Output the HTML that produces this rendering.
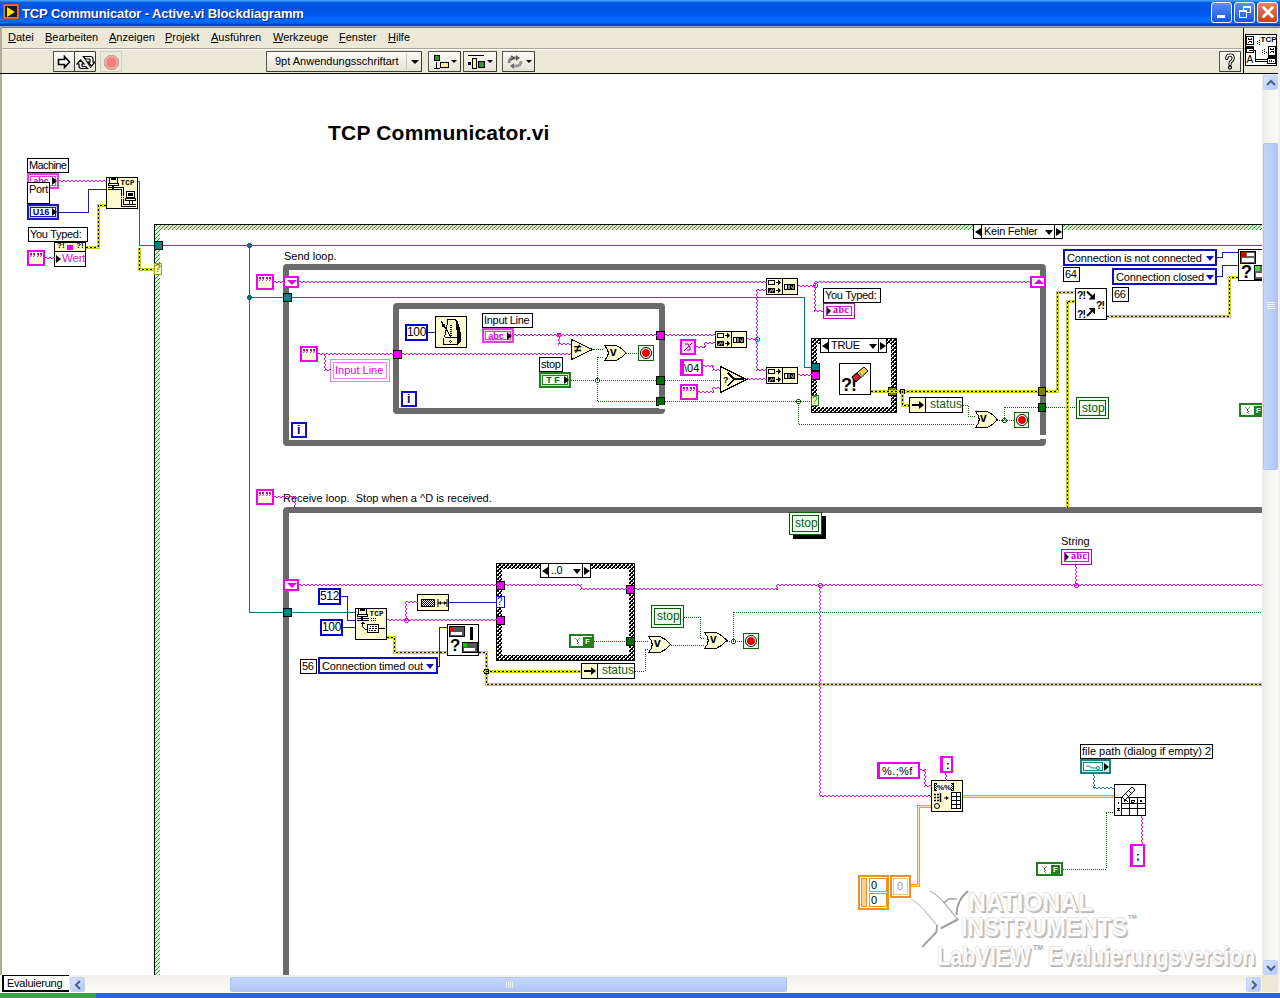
<!DOCTYPE html>
<html><head><meta charset="utf-8">
<style>
*{box-sizing:border-box}
html,body{margin:0;padding:0;width:1280px;height:998px;overflow:hidden;background:#fff;font-family:"Liberation Sans",sans-serif;font-size:11px;color:#000}
.a{position:absolute}
#title{left:0;top:0;width:1280px;height:28px;background:linear-gradient(#3d9bff 0,#3d9bff 1px,#2a80f0 1px,#2a80f0 2px,#0062e2 2px,#0058e4 4px,#0054e3 8px,#0056e8 13px,#005cf4 16px,#006cf8 19px,#0066f4 23px,#0048c8 24px,#0034ac 26px,#a8b0c8 26px,#a8b0c8 27px,#7c7464 27px,#7c7464 28px)}
#title .t{left:22px;top:6px;color:#fff;font-weight:bold;font-size:13px;letter-spacing:-0.12px;text-shadow:1px 1px 0 #0a1e7a}
#menu{left:0;top:28px;width:1280px;height:20px;background:#ece9d8}
#menu span{position:absolute;top:3px;font-size:11px}
#tool{left:0;top:48px;width:1280px;height:25px;background:#ece9d8;border-top:1px solid #aca899}
#canvas{left:0;top:73px;width:1262px;height:903px;background:#fff;border-top:2px solid #000;border-left:2px solid #a8a89c}
.btn{position:absolute;background:linear-gradient(#fbfbf7,#e6e3d3);border:1px solid #58574c;border-right-color:#3c3b32;border-bottom-color:#3c3b32;border-radius:1px}
.lbl{position:absolute;background:#fff;border:1px solid #000;font-size:11px;line-height:13px;padding:0 1px;white-space:nowrap}
.num{position:absolute;background:#fff;border:2px solid #1010c0;font-size:11px;line-height:12px;padding:0 1px;white-space:nowrap}
.ycell{position:absolute;background:#fcfccc;border:1px solid #000}
.pinkc{position:absolute;background:#fcfccc;border:3px solid #f000f0}
</style><style>.tx{font-size:11px;line-height:13px;white-space:nowrap}</style></head><body>
<div id="title" class="a">
  <div class="a" style="left:4px;top:5px;width:14px;height:13px;background:#1a1a1a;border:1px solid #c89010;box-shadow:0 0 0 1px #e05020"><div class="a" style="left:2px;top:1px;width:0;height:0;border-left:8px solid #f8e000;border-top:5px solid transparent;border-bottom:5px solid transparent"></div></div>
  <div class="a t">TCP Communicator - Active.vi Blockdiagramm</div>
  <div class="a" style="left:1211px;top:2px;width:21px;height:21px;border:1px solid #fff;border-radius:3px;background:linear-gradient(#5b8ef8,#1b52e0)"><div class="a" style="left:5px;top:12px;width:8px;height:3px;background:#fff"></div></div>
  <div class="a" style="left:1234px;top:2px;width:21px;height:21px;border:1px solid #fff;border-radius:3px;background:linear-gradient(#5b8ef8,#1b52e0)"><div class="a" style="left:8px;top:3px;width:8px;height:7px;border:1px solid #fff;border-top-width:2px"></div><div class="a" style="left:4px;top:7px;width:8px;height:8px;border:1px solid #fff;border-top-width:2px;background:#3a6ef0"></div></div>
  <div class="a" style="left:1257px;top:2px;width:21px;height:21px;border:1px solid #fff;border-radius:3px;background:linear-gradient(#e8845f,#c8401c)"><div class="a" style="left:1px;top:-1px;color:#fff;font-size:19px;font-weight:bold;line-height:21px;width:18px;text-align:center">✕</div></div>
</div>
<div id="menu" class="a">
  <span style="left:8px"><u>D</u>atei</span>
  <span style="left:45px"><u>B</u>earbeiten</span>
  <span style="left:109px"><u>A</u>nzeigen</span>
  <span style="left:165px"><u>P</u>rojekt</span>
  <span style="left:211px"><u>A</u>usführen</span>
  <span style="left:273px"><u>W</u>erkzeuge</span>
  <span style="left:339px"><u>F</u>enster</span>
  <span style="left:388px"><u>H</u>ilfe</span>
</div>
<div id="tool" class="a">
  <div class="btn" style="left:53px;top:2px;width:22px;height:21px"><svg class="a" style="left:3px;top:3px" width="15" height="14"><path d="M1.5 4.5h6v-3l5 5.5-5 5.5v-3h-6z" fill="#fff" stroke="#000" stroke-width="1.6"/></svg></div>
  <div class="btn" style="left:74px;top:2px;width:22px;height:21px;border-color:#3c3c30"><svg class="a" style="left:1px;top:1px" width="19" height="18"><path d="M7.5 3.5h7q2.5 0 2.5 2.5v3h2l-3.5 4-3.5-4h2v-2.5q0-.5-.5-.5h-4z" fill="#fff" stroke="#000" stroke-width="1.2"/><path d="M11.5 15.5h-6q-2.5 0-2.5-2.5v-2h-2l3.5-4 3.5 4h-2v2q0 .5.5.5h3z" fill="#fff" stroke="#000" stroke-width="1.2"/><path d="M7 3l8 12" stroke="#000" stroke-width="1"/></svg></div>
  <div class="a" style="left:100px;top:2px;width:22px;height:21px;border:1px solid #d4d0c0;background:#ebe9dc"><svg class="a" style="left:2px;top:2px" width="17" height="17"><path d="M5.5 1.5h6l4 4v6l-4 4h-6l-4-4v-6z" fill="#f49090" stroke="#b8a898" stroke-width="1"/><path d="M6 3h5l3 3v5l-3 3h-5l-3-3v-5z" fill="#f28080" stroke="#f8c8c0" stroke-width="0.8"/></svg></div>
  <div class="btn" style="left:266px;top:2px;width:156px;height:21px"><span class="a" style="left:8px;top:3px;font-size:11px">9pt Anwendungsschriftart</span><div class="a" style="left:139px;top:2px;width:1px;height:16px;background:#c8c5b5"></div><div class="a" style="left:144px;top:8px;border-left:4px solid transparent;border-right:4px solid transparent;border-top:4px solid #000"></div></div>
  <div class="btn" style="left:428px;top:2px;width:33px;height:21px"><div class="a" style="left:5px;top:3px;width:6px;height:6px;background:#2a9a2a;border:1px solid #000"></div><div class="a" style="left:7px;top:10px;width:1px;height:6px;background:#000"></div><div class="a" style="left:5px;top:16px;width:6px;height:1px;background:#000"></div><div class="a" style="left:11px;top:10px;width:9px;height:6px;background:#f8f098;border:1px solid #000"></div><div class="a" style="left:22px;top:8px;border-left:3px solid transparent;border-right:3px solid transparent;border-top:3px solid #000"></div></div>
  <div class="btn" style="left:463px;top:2px;width:34px;height:21px"><div class="a" style="left:4px;top:3px;width:16px;height:1px;background:#000"></div><div class="a" style="left:4px;top:10px;width:3px;height:3px;background:#000"></div><div class="a" style="left:8px;top:6px;width:5px;height:11px;background:#f8f098;border:1px solid #000"></div><div class="a" style="left:14px;top:9px;width:7px;height:7px;background:#2a9a2a;border:1px solid #000"></div><div class="a" style="left:23px;top:8px;border-left:3px solid transparent;border-right:3px solid transparent;border-top:3px solid #000"></div></div>
  <div class="btn" style="left:502px;top:2px;width:33px;height:21px"><svg class="a" style="left:2px;top:2px" width="20" height="16"><path d="M4 9Q4 4 9 4H12" fill="none" stroke="#8a8a8a" stroke-width="3"/><path d="M11 1l4 3-4 3z" fill="#5a5a5a"/><path d="M16 7Q16 12 11 12H8" fill="none" stroke="#9a9a9a" stroke-width="3"/><path d="M9 9l-4 3 4 3z" fill="#6a6a6a"/><path d="M6 2l3 2-3 2" fill="none" stroke="#444" stroke-width="1.2"/></svg><div class="a" style="left:23px;top:8px;border-left:3px solid transparent;border-right:3px solid transparent;border-top:3px solid #000"></div></div>
  <div class="btn" style="left:1219px;top:2px;width:22px;height:21px"><svg class="a" style="left:0;top:0" width="20" height="19"><path d="M6.8 6.5Q6.8 3 10 3Q13.2 3 13.2 6.2Q13.2 8.2 11 9.6Q10 10.4 10 12V12.6" fill="none" stroke="#000" stroke-width="3.2" stroke-linecap="round"/><path d="M6.8 6.5Q6.8 3 10 3Q13.2 3 13.2 6.2Q13.2 8.2 11 9.6Q10 10.4 10 12V12.6" fill="none" stroke="#ffffe8" stroke-width="1.3" stroke-linecap="round"/><circle cx="10" cy="15.6" r="2.1" fill="#000"/><circle cx="10" cy="15.6" r="0.9" fill="#fff"/></svg></div>
  <div class="a" style="left:1243px;top:-21px;width:1px;height:45px;background:#000"></div>
  <div class="a" style="left:1245px;top:-15px;width:32px;height:32px;background:#fff;border:1px solid #000"><svg class="a" style="left:-1px;top:-1px" width="32" height="32" shape-rendering="crispEdges"><rect x="1.5" y="2.5" width="7" height="8" fill="#fff" stroke="#000"/><path d="M3 4h1M6 4h1M3 5h4M4 7h3M3 8h1M6 8h1" stroke="#000"/><path d="M1 12h8v2h-8z" fill="#000"/><rect x="1.5" y="14.5" width="7" height="4" fill="#fff" stroke="#000"/><path d="M1 16h1M4 16h4" stroke="#000"/><path d="M9 16.5h1.5v9h12" stroke="#000" fill="none"/><path d="M9 18.5h-0.5M10.5 18.5v9h12" stroke="#000" fill="none"/><path d="M12 7h1M14 6h1M12 9h1M14 8h1M14 10h1" stroke="#000"/><text x="15.5" y="8" font-size="8" font-weight="bold" font-family="Liberation Sans,sans-serif">TCP</text><rect x="23.5" y="12.5" width="7" height="9" fill="#fff" stroke="#000"/><path d="M25 14h1M28 14h1M25 15h4M26 17h3M25 18h1M28 18h1" stroke="#000"/><path d="M23 22h8v2h-8z" fill="#000"/><path d="M17 16h1M19 15h1M17 18h1M19 17h1M21 18h1M19 19h1" stroke="#000"/><rect x="22.5" y="24.5" width="8" height="5" fill="#fff" stroke="#000"/><path d="M24 26h1v2h-1zM26 26h1v2h-1zM28 27h1v1h-1z" fill="#000"/><text x="1.5" y="29" font-size="10" font-family="Liberation Sans,sans-serif">A</text></svg></div>
</div>
<div class="a" style="left:0;top:74px;width:1262px;height:901px;overflow:hidden;background:#fff"><div class="a" style="left:0;top:-74px;width:1280px;height:998px"><svg class="a" style="left:154px;top:224px" width="1146" height="876" shape-rendering="crispEdges"><defs><pattern id="hp" width="4" height="4" patternUnits="userSpaceOnUse"><rect width="4" height="4" fill="#d0f8d0"/><rect x="3" y="0" width="1" height="1" fill="#3c903c"/><rect x="2" y="1" width="1" height="1" fill="#3c903c"/><rect x="1" y="2" width="1" height="1" fill="#3c903c"/><rect x="0" y="3" width="1" height="1" fill="#3c903c"/></pattern></defs><rect x="0" y="0" width="1146" height="876" fill="url(#hp)"/><rect x="0.5" y="0.5" width="1145" height="875" fill="none" stroke="#000"/><rect x="6" y="6" width="1146" height="876" fill="#fff"/></svg>
<div class="a" style="left:973px;top:224px;width:90px;height:15px;background:#fff;border:1px solid #000"><div class="a" style="left:1px;top:3px;border-right:6px solid #000;border-top:4px solid transparent;border-bottom:4px solid transparent"></div><div class="a" style="left:7px;top:0;width:1px;height:13px;background:#000"></div><span class="a tx" style="left:10px;top:0;letter-spacing:-0.25px">Kein Fehler</span><div class="a" style="left:71px;top:5px;border-left:4px solid transparent;border-right:4px solid transparent;border-top:5px solid #000"></div><div class="a" style="left:80px;top:0;width:1px;height:13px;background:#000"></div><div class="a" style="left:82px;top:3px;border-left:6px solid #000;border-top:4px solid transparent;border-bottom:4px solid transparent"></div></div>
<div class="a tx" style="left:328px;top:125px;font-size:21px;font-weight:bold;letter-spacing:0.2px;line-height:16px">TCP Communicator.vi</div>
<div class="a" style="left:283px;top:264px;width:763px;height:182px;border:6px solid #6a6a6a;border-radius:4px"></div>
<div class="a" style="left:393px;top:303px;width:272px;height:111px;border:6px solid #6a6a6a;border-radius:4px"></div>
<div class="a" style="left:283px;top:507px;width:1117px;height:593px;border:6px solid #6a6a6a;border-radius:4px"></div>
<div class="a" style="left:27px;top:158px;width:42px;height:15px;background:#fff;border:1px solid #000;"><span class="a tx" style="left:1px;top:0px;letter-spacing:-0.6px">Machine</span></div>
<div class="a" style="left:27px;top:173px;width:32px;height:16px;background:#f8d0f8;border:2px solid #e040e0"><div class="a" style="left:1px;top:1px;right:1px;bottom:1px;background:#fff;border:1px solid #e040e0"></div><span class="a" style="left:2px;width:20px;text-align:center;top:0px;font-size:9px;line-height:12px;font-weight:bold;color:#d000d0">abc</span><div class="a" style="right:0px;top:2px;border-left:5px solid #000;border-top:4px solid transparent;border-bottom:4px solid transparent"></div></div>
<div class="a" style="left:27px;top:182px;width:23px;height:22px;background:#fff;border:1px solid #000;"><span class="a tx" style="left:1px;top:0px;letter-spacing:-0.3px">Port</span></div>
<div class="a" style="left:27px;top:204px;width:32px;height:16px;background:#c8c8f0;border:2px solid #1818c0"><div class="a" style="left:1px;top:1px;right:1px;bottom:1px;background:#fff;border:1px solid #1818c0"></div><span class="a" style="left:2px;width:20px;text-align:center;top:0px;font-size:9px;line-height:12px;font-weight:bold;color:#0000a0">U16</span><div class="a" style="right:0px;top:2px;border-left:5px solid #000;border-top:4px solid transparent;border-bottom:4px solid transparent"></div></div>
<div class="a" style="left:28px;top:227px;width:60px;height:15px;background:#fff;border:1px solid #000;"><span class="a tx" style="left:1px;top:0px;letter-spacing:-0.3px">You Typed:</span></div>
<div class="a" style="left:54px;top:242px;width:32px;height:25px;background:#fff;border:1px solid #000"><div class="a" style="left:0;top:0;width:30px;height:9px;background:#fcfcd0;border-bottom:1px solid #000"></div><span class="a" style="left:2px;top:-2px;font-size:8px;font-weight:bold">?!</span><div class="a" style="left:12px;top:2px;width:6px;height:5px;background:#f000f0"></div><span class="a" style="left:21px;top:-2px;font-size:8px;font-weight:bold">?!</span><div class="a" style="left:1px;top:12px;border-left:5px solid #000;border-top:4px solid transparent;border-bottom:4px solid transparent"></div><span class="a" style="left:7px;top:9px;font-size:11.5px;line-height:13px;color:#d020d0;letter-spacing:-0.2px">Wert</span></div>
<div class="a" style="left:27px;top:250px;width:18px;height:16px;background:linear-gradient(#fff 0,#fff 40%,#fcfcd0 60%);border:2px solid #f000f0;"><svg class="a" style="left:0;top:0" width="14" height="8"><path d="M1 1h2v2l-1 2h-1l1-2h-1z" fill="#a01ca0"/><path d="M4 1h2v2l-1 2h-1l1-2h-1z" fill="#a01ca0"/><path d="M8 1h2v2l-1 2h-1l1-2h-1z" fill="#a01ca0"/><path d="M11 1h2v2l-1 2h-1l1-2h-1z" fill="#a01ca0"/></svg></div>
<div class="a" style="left:106px;top:177px;width:32px;height:32px;background:#fcfcd0;border:1px solid #000;"><svg class="a" style="left:0;top:0" width="30" height="30" shape-rendering="crispEdges"><path d="M2.5 0v5.5h8v-5.5" stroke="#000" fill="none"/><rect x="4" y="0" width="5" height="2" fill="#000"/><rect x="1.5" y="5.5" width="10" height="2" fill="#fff" stroke="#000"/><path d="M1 9.5H5M7 9.5H16.5V26.5H29M1 11.5H5M7 11.5H14.5V28.5H29" stroke="#000" fill="none"/><path d="M5 9.5l1-1 1 1M5 11.5l1-1 1 1" stroke="#000" fill="none"/><rect x="14" y="18" width="3" height="1" fill="#fcfcd0"/><rect x="14" y="20" width="3" height="1" fill="#fcfcd0"/><path d="M19.5 13.5v6h8v-6z" stroke="#000" fill="#fff"/><rect x="21" y="15" width="5" height="3" fill="#000"/><rect x="18.5" y="20.5" width="10" height="2" fill="#fff" stroke="#000"/><path d="M22 23v3M25 23v3" stroke="#000"/><text x="13.5" y="7" font-size="7.5" font-weight="bold" font-family="Liberation Mono,monospace" letter-spacing="0.3">TCP</text></svg></div>
<div class="a" style="left:154px;top:241px;width:9px;height:9px;background:#008080;border:1px solid #000"></div>
<div class="a" style="left:154px;top:263px;width:8px;height:12px;background:#fcfcb0;border:1px solid #a0a000"><span class="a" style="left:0;top:-1px;font-size:10px;color:#606000">?</span></div>
<div class="a" style="left:283px;top:293px;width:9px;height:9px;background:#008080;border:1px solid #000"></div>
<div class="a" style="left:283px;top:608px;width:9px;height:9px;background:#008080;border:1px solid #000"></div>
<div class="a tx" style="left:284px;top:250px;">Send loop.</div>
<div class="a" style="left:256px;top:274px;width:18px;height:16px;background:linear-gradient(#fff 0,#fff 40%,#fcfcd0 60%);border:2px solid #f000f0;"><svg class="a" style="left:0;top:0" width="14" height="8"><path d="M1 1h2v2l-1 2h-1l1-2h-1z" fill="#a01ca0"/><path d="M4 1h2v2l-1 2h-1l1-2h-1z" fill="#a01ca0"/><path d="M8 1h2v2l-1 2h-1l1-2h-1z" fill="#a01ca0"/><path d="M11 1h2v2l-1 2h-1l1-2h-1z" fill="#a01ca0"/></svg></div>
<div class="a" style="left:283px;top:276px;width:16px;height:12px;background:#fff;border:2px solid #f000f0"><div class="a" style="left:2px;top:2px;border-top:5px solid #e000e0;border-left:5px solid transparent;border-right:5px solid transparent"></div></div>
<div class="a" style="left:1030px;top:276px;width:16px;height:12px;background:#fff;border:2px solid #f000f0"><div class="a" style="left:2px;top:1px;border-bottom:5px solid #e000e0;border-left:5px solid transparent;border-right:5px solid transparent"></div></div>
<div class="a" style="left:291px;top:422px;width:16px;height:16px;background:#fff;border:2px solid #1010c0"><span class="a" style="left:4px;top:-1px;font-size:12px;font-weight:bold;color:#000090;font-family:Liberation Sans,sans-serif">i</span></div>
<div class="a" style="left:405px;top:324px;width:23px;height:17px;background:#fff;border:2px solid #0000d0;"><span class="a tx" style="left:0;width:19px;text-align:center;top:0px;letter-spacing:-0.3px;font-size:12px">100</span></div>
<div class="a" style="left:435px;top:316px;width:32px;height:32px;background:#fcfcd0;border:1px solid #000;"><svg class="a" style="left:0;top:0" width="30" height="30" shape-rendering="crispEdges"><path d="M11.5 2.5h8l3 6 2 10-3 8h-13l1-6h-2l3-16z" fill="#fcfcd0" stroke="none"/><path d="M11 2.5h9M11.5 3v3l-3 14M8.5 20.5h12M7.5 21v6.5h13.5V21" stroke="#000" fill="none"/><path d="M19 2l3 3 2 7 1.5 8-1 5-3.5 3v-8l-1-14z" fill="#000"/><path d="M14 8h2M14 10h2M14 12h2M14 14h2M14 16h2M14 18h2" stroke="#000"/><path d="M5 4l10 16" stroke="#000"/><rect x="6" y="7" width="3" height="3" fill="#000"/><path d="M14 23h1M13 24h1M15 24h1M14 25h1" stroke="#000"/></svg></div>
<div class="a" style="left:482px;top:313px;width:51px;height:15px;background:#fff;border:1px solid #000;"><span class="a tx" style="left:1px;top:0px;letter-spacing:-0.3px">Input Line</span></div>
<div class="a" style="left:482px;top:328px;width:32px;height:15px;background:#f8d0f8;border:2px solid #e040e0"><div class="a" style="left:1px;top:1px;right:1px;bottom:1px;background:#fff;border:1px solid #e040e0"></div><span class="a" style="left:2px;width:20px;text-align:center;top:0px;font-size:9px;line-height:12px;font-weight:bold;color:#d000d0">abc</span><div class="a" style="right:0px;top:2px;border-left:5px solid #000;border-top:4px solid transparent;border-bottom:4px solid transparent"></div></div>
<div class="a" style="left:300px;top:346px;width:18px;height:16px;background:linear-gradient(#fff 0,#fff 40%,#fcfcd0 60%);border:2px solid #f000f0;"><svg class="a" style="left:0;top:0" width="14" height="8"><path d="M1 1h2v2l-1 2h-1l1-2h-1z" fill="#a01ca0"/><path d="M4 1h2v2l-1 2h-1l1-2h-1z" fill="#a01ca0"/><path d="M8 1h2v2l-1 2h-1l1-2h-1z" fill="#a01ca0"/><path d="M11 1h2v2l-1 2h-1l1-2h-1z" fill="#a01ca0"/></svg></div>
<div class="a" style="left:330px;top:359px;width:60px;height:23px;background:#fff;border:1px solid #f080f0"><div class="a" style="left:2px;top:2px;right:2px;bottom:2px;border:1px solid #f080f0"></div><span class="a tx" style="left:4px;top:4px;color:#e000e0">Input Line</span></div>
<div class="a" style="left:393px;top:350px;width:9px;height:9px;background:#f000f0;border:1px solid #000"></div>
<div class="a" style="left:401px;top:391px;width:16px;height:16px;background:#fff;border:2px solid #1010c0"><span class="a" style="left:4px;top:-1px;font-size:12px;font-weight:bold;color:#000090;font-family:Liberation Sans,sans-serif">i</span></div>
<div class="a" style="left:638px;top:345px;width:16px;height:16px;background:#e8f8e8;border:1px solid #106010"><div class="a" style="left:1px;top:1px;width:12px;height:12px;border-radius:50%;background:#fff;border:1px solid #300000"></div><div class="a" style="left:3px;top:3px;width:8px;height:8px;border-radius:50%;background:#f00000;border:1px solid #c00000"></div></div>
<div class="a" style="left:539px;top:357px;width:24px;height:15px;background:#fff;border:1px solid #000;"><span class="a tx" style="left:1px;top:0px;letter-spacing:-0.3px">stop</span></div>
<div class="a" style="left:539px;top:372px;width:32px;height:16px;background:#c0e8c0;border:2px solid #208020"><div class="a" style="left:1px;top:1px;right:1px;bottom:1px;background:#f0fff0;border:1px solid #208020"></div><span class="a" style="left:2px;width:20px;text-align:center;top:0px;font-size:9px;line-height:12px;font-weight:bold;color:#106010">T F</span><div class="a" style="right:0px;top:2px;border-left:5px solid #000;border-top:4px solid transparent;border-bottom:4px solid transparent"></div></div>
<div class="a" style="left:656px;top:331px;width:9px;height:9px;background:#f000f0;border:1px solid #000"></div>
<div class="a" style="left:656px;top:376px;width:9px;height:9px;background:#007000;border:1px solid #000"></div>
<div class="a" style="left:656px;top:397px;width:9px;height:9px;background:#007000;border:1px solid #000"></div>
<div class="a" style="left:766px;top:278px;width:32px;height:17px;background:#fcfcd0;border:1px solid #000;"><div class="a" style="left:15px;top:0;width:1px;height:15px;background:#000"></div><svg class="a" style="left:0;top:0" width="30" height="15"><rect x="1" y="1" width="7" height="5" fill="#000"/><rect x="2" y="2" width="5" height="3" fill="#fcfcd0"/><rect x="1" y="9" width="7" height="5" fill="#000"/><path d="M2 13h1M3 12h1M4 11h1M5 12h1M6 11h1" stroke="#fff"/><path d="M9 3.5h3M9 11.5h3" stroke="#000" stroke-width="1.2"/><path d="M11 0.5L14 3.5L11 6.5zM11 8.5L14 11.5L11 14.5z" fill="#000"/><rect x="17" y="5" width="11" height="6" fill="#000"/><rect x="18" y="6" width="2" height="4" fill="#fff"/><path d="M21 7h2M22 9h1M21 9h1" stroke="#fff"/><path d="M25 9h2M24 8h1M26 7h1" stroke="#fff"/></svg></div>
<div class="a" style="left:715px;top:331px;width:32px;height:17px;background:#fcfcd0;border:1px solid #000;"><div class="a" style="left:15px;top:0;width:1px;height:15px;background:#000"></div><svg class="a" style="left:0;top:0" width="30" height="15"><rect x="1" y="1" width="7" height="5" fill="#000"/><rect x="2" y="2" width="5" height="3" fill="#fcfcd0"/><rect x="1" y="9" width="7" height="5" fill="#000"/><path d="M2 13h1M3 12h1M4 11h1M5 12h1M6 11h1" stroke="#fff"/><path d="M9 3.5h3M9 11.5h3" stroke="#000" stroke-width="1.2"/><path d="M11 0.5L14 3.5L11 6.5zM11 8.5L14 11.5L11 14.5z" fill="#000"/><rect x="17" y="5" width="11" height="6" fill="#000"/><rect x="18" y="6" width="2" height="4" fill="#fff"/><path d="M21 7h2M22 9h1M21 9h1" stroke="#fff"/><path d="M25 9h2M24 8h1M26 7h1" stroke="#fff"/></svg></div>
<div class="a" style="left:766px;top:367px;width:32px;height:17px;background:#fcfcd0;border:1px solid #000;"><div class="a" style="left:15px;top:0;width:1px;height:15px;background:#000"></div><svg class="a" style="left:0;top:0" width="30" height="15"><rect x="1" y="1" width="7" height="5" fill="#000"/><rect x="2" y="2" width="5" height="3" fill="#fcfcd0"/><rect x="1" y="9" width="7" height="5" fill="#000"/><path d="M2 13h1M3 12h1M4 11h1M5 12h1M6 11h1" stroke="#fff"/><path d="M9 3.5h3M9 11.5h3" stroke="#000" stroke-width="1.2"/><path d="M11 0.5L14 3.5L11 6.5zM11 8.5L14 11.5L11 14.5z" fill="#000"/><rect x="17" y="5" width="11" height="6" fill="#000"/><rect x="18" y="6" width="2" height="4" fill="#fff"/><path d="M21 7h2M22 9h1M21 9h1" stroke="#fff"/><path d="M25 9h2M24 8h1M26 7h1" stroke="#fff"/></svg></div>
<div class="a" style="left:680px;top:339px;width:16px;height:16px;background:#f8d8f8;border:2px solid #f000f0"><svg class="a" style="left:0;top:0" width="12" height="12"><path d="M2 10L10 2" stroke="#a000a0"/><path d="M3 3h3l2 3v3h-3" stroke="#a000a0" fill="none"/></svg></div>
<div class="a" style="left:680px;top:359px;width:23px;height:17px;background:#fff;border:2px solid #f000f0;border-left-width:4px"><span class="a tx" style="left:0;top:1px">\04</span></div>
<div class="a" style="left:680px;top:384px;width:18px;height:16px;background:linear-gradient(#fff 0,#fff 40%,#fcfcd0 60%);border:2px solid #f000f0;"><svg class="a" style="left:0;top:0" width="14" height="8"><path d="M1 1h2v2l-1 2h-1l1-2h-1z" fill="#a01ca0"/><path d="M4 1h2v2l-1 2h-1l1-2h-1z" fill="#a01ca0"/><path d="M8 1h2v2l-1 2h-1l1-2h-1z" fill="#a01ca0"/><path d="M11 1h2v2l-1 2h-1l1-2h-1z" fill="#a01ca0"/></svg></div>
<div class="a" style="left:823px;top:288px;width:58px;height:15px;background:#fff;border:1px solid #000;"><span class="a tx" style="left:1px;top:0px;letter-spacing:-0.3px">You Typed:</span></div>
<div class="a" style="left:823px;top:303px;width:32px;height:16px;background:#fdf0fd;border:1px solid #a010a0"><div class="a" style="left:2px;top:2px;right:2px;bottom:2px;border:1px solid #c020c0"></div><div class="a" style="left:3px;top:3px;border-left:4px solid #200020;border-top:4px solid transparent;border-bottom:4px solid transparent"></div><span class="a" style="left:9px;top:0;font-size:10px;font-weight:bold;color:#c000c0;font-family:Liberation Serif,serif;letter-spacing:0.5px">abc</span></div>
<svg class="a" style="left:811px;top:338px" width="86" height="75" shape-rendering="crispEdges"><defs><pattern id="ck811" x="1" y="1" width="4" height="4" patternUnits="userSpaceOnUse"><rect width="4" height="4" fill="#000"/><rect x="0" y="0" width="2" height="1" fill="#fff"/><rect x="0" y="1" width="1" height="1" fill="#fff"/><rect x="2" y="2" width="2" height="1" fill="#fff"/><rect x="2" y="3" width="1" height="1" fill="#fff"/></pattern></defs><rect width="86" height="75" fill="url(#ck811)"/><rect x="0.5" y="0.5" width="85" height="74" fill="none" stroke="#000"/><rect x="6" y="6" width="74" height="63" fill="#fff"/></svg>
<div class="a" style="left:820px;top:338px;width:67px;height:15px;background:#fff;border:1px solid #000"><div class="a" style="left:1px;top:3px;border-right:6px solid #000;border-top:4px solid transparent;border-bottom:4px solid transparent"></div><div class="a" style="left:7px;top:0;width:1px;height:13px;background:#000"></div><span class="a tx" style="left:10px;top:0;letter-spacing:-0.3px">TRUE</span><div class="a" style="left:48px;top:5px;border-left:4px solid transparent;border-right:4px solid transparent;border-top:5px solid #000"></div><div class="a" style="left:57px;top:0;width:1px;height:13px;background:#000"></div><div class="a" style="left:59px;top:3px;border-left:6px solid #000;border-top:4px solid transparent;border-bottom:4px solid transparent"></div></div>
<div class="a" style="left:839px;top:363px;width:32px;height:32px;background:#fcfcd0;border:1px solid #000;background:#fff"><span class="a" style="left:1px;top:12px;font-size:18px;font-weight:bold;line-height:19px;letter-spacing:-1px">?!</span><svg class="a" style="left:0;top:0" width="30" height="30"><path d="M12 13l12-10 4 4-12 11z" fill="#f0d040" stroke="#000"/><path d="M12 13l5-4 3.5 4-4.5 5z" fill="#d02040" stroke="#000"/><path d="M19.5 9l4 4" stroke="#a0a0a0" stroke-width="1.5"/></svg></div>
<div class="a" style="left:811px;top:363px;width:9px;height:8px;background:#008080;border:1px solid #000"></div>
<div class="a" style="left:811px;top:371px;width:9px;height:9px;background:#f000f0;border:1px solid #000"></div>
<div class="a" style="left:811px;top:395px;width:8px;height:11px;background:#f0fcc0;border:1px solid #208020"><span class="a" style="left:0;top:-1px;font-size:10px;color:#208020">?</span></div>
<div class="a" style="left:888px;top:387px;width:9px;height:9px;background:#808000;border:1px solid #000"></div>
<div class="a" style="left:909px;top:397px;width:54px;height:16px;background:#fff;border:1px solid #000"><div class="a" style="left:0;top:0;width:16px;height:14px;background:#fcfcd0;border-right:1px solid #000"></div><svg class="a" style="left:1px;top:2px" width="14" height="10"><path d="M1 5h8" stroke="#000" stroke-width="2"/><path d="M8 1l5 4-5 4z" fill="#000"/></svg><span class="a tx" style="left:20px;top:0;color:#106010;font-size:12px">status</span></div>
<div class="a" style="left:1014px;top:412px;width:15px;height:16px;background:#e8f8e8;border:1px solid #106010"><div class="a" style="left:1px;top:1px;width:12px;height:12px;border-radius:50%;background:#fff;border:1px solid #300000"></div><div class="a" style="left:3px;top:3px;width:8px;height:8px;border-radius:50%;background:#f00000;border:1px solid #c00000"></div></div>
<div class="a" style="left:1038px;top:387px;width:8px;height:9px;background:#808000;border:1px solid #000"></div>
<div class="a" style="left:1038px;top:403px;width:8px;height:9px;background:#007000;border:1px solid #000"></div>
<div class="a" style="left:1076px;top:397px;width:33px;height:22px;background:#f0fcf0;border:1px solid #105a10"><div class="a" style="left:2px;top:2px;right:2px;bottom:2px;border:1px solid #105a10"></div><span class="a tx" style="left:5px;top:4px;color:#105a10;font-size:12px">stop</span></div>
<div class="a" style="left:1075px;top:288px;width:32px;height:32px;background:#fcfcd0;border:1px solid #000;background:#fff"><svg class="a" style="left:0;top:0" width="30" height="30"><g font-family="Liberation Sans,sans-serif" font-weight="bold" font-size="10.5" letter-spacing="-0.8"><text x="1" y="10">?!</text><text x="20" y="20">?!</text><text x="1" y="29">?!</text></g><path d="M11 2.5l6 6" stroke="#000" stroke-width="2"/><path d="M19 10.5h-6.5l6.5-6.5z" fill="#000"/><path d="M11 27l6-6" stroke="#000" stroke-width="2"/><path d="M19 19h-6.5l6.5 6.5z" fill="#000"/></svg></div>
<div class="a" style="left:1063px;top:249px;width:154px;height:17px;background:#fff;border:2px solid #1010c0"><span class="a tx" style="left:2px;top:1px;letter-spacing:-0.15px">Connection is not connected</span><div class="a" style="left:141px;top:5px;border-left:4px solid transparent;border-right:4px solid transparent;border-top:5px solid #1010c0"></div></div>
<div class="a" style="left:1063px;top:267px;width:17px;height:15px;background:#fff;border:1px solid #000;"><span class="a tx" style="left:1px;top:0px;letter-spacing:-0.3px">64</span></div>
<div class="a" style="left:1112px;top:268px;width:105px;height:17px;background:#fff;border:2px solid #1010c0"><span class="a tx" style="left:2px;top:1px;letter-spacing:-0.15px">Connection closed</span><div class="a" style="left:92px;top:5px;border-left:4px solid transparent;border-right:4px solid transparent;border-top:5px solid #1010c0"></div></div>
<div class="a" style="left:1112px;top:287px;width:17px;height:15px;background:#fff;border:1px solid #000;"><span class="a tx" style="left:1px;top:0px;letter-spacing:-0.3px">66</span></div>
<div class="a" style="left:1238px;top:249px;width:32px;height:32px;background:#fcfcd0;border:1px solid #000;background:#fff"><div class="a" style="left:1px;top:1px;width:16px;height:13px;background:#606060;border:1px solid #000"></div><div class="a" style="left:2px;top:2px;width:5px;height:5px;background:#e00000"></div><div class="a" style="left:8px;top:3px;width:7px;height:3px;background:#fff"></div><div class="a" style="left:3px;top:8px;width:12px;height:4px;background:#fff"></div><span class="a" style="left:2px;top:14px;font-size:18px;font-weight:bold;line-height:17px;font-family:Liberation Sans,sans-serif">?</span><div class="a" style="left:15px;top:15px;width:16px;height:15px;background:#606060;border:1px solid #000"></div><div class="a" style="left:16px;top:16px;width:5px;height:5px;background:#40e040"></div><div class="a" style="left:17px;top:23px;width:12px;height:4px;background:#fff"></div></div>
<div class="a" style="left:1239px;top:403px;width:31px;height:14px;background:#fff;border:2px solid #208020"><svg class="a" style="left:4px;top:1px" width="6" height="9"><path d="M0.5 1.5l1 1M4.5 1.5l-1 1M2.5 3v1.5l1 1-1 1 1 1" stroke="#000" fill="none" stroke-width="0.9"/></svg><div class="a" style="left:13px;top:1px;width:9px;height:9px;background:#208020;color:#fff;font-size:8px;line-height:9px;text-align:center;font-weight:bold">F</div></div>
<div class="a" style="left:256px;top:489px;width:18px;height:16px;background:linear-gradient(#fff 0,#fff 40%,#fcfcd0 60%);border:2px solid #f000f0;"><svg class="a" style="left:0;top:0" width="14" height="8"><path d="M1 1h2v2l-1 2h-1l1-2h-1z" fill="#a01ca0"/><path d="M4 1h2v2l-1 2h-1l1-2h-1z" fill="#a01ca0"/><path d="M8 1h2v2l-1 2h-1l1-2h-1z" fill="#a01ca0"/><path d="M11 1h2v2l-1 2h-1l1-2h-1z" fill="#a01ca0"/></svg></div>
<div class="a tx" style="left:283px;top:492px;">Receive loop.&nbsp; Stop when a ^D is received.</div>
<div class="a" style="left:283px;top:579px;width:16px;height:12px;background:#fff;border:2px solid #f000f0"><div class="a" style="left:2px;top:2px;border-top:5px solid #e000e0;border-left:5px solid transparent;border-right:5px solid transparent"></div></div>
<div class="a" style="left:318px;top:588px;width:23px;height:17px;background:#fff;border:2px solid #0000d0;"><span class="a tx" style="left:0;width:19px;text-align:center;top:0px;letter-spacing:-0.3px;font-size:12px">512</span></div>
<div class="a" style="left:320px;top:619px;width:23px;height:17px;background:#fff;border:2px solid #0000d0;"><span class="a tx" style="left:0;width:19px;text-align:center;top:0px;letter-spacing:-0.3px;font-size:12px">100</span></div>
<div class="a" style="left:355px;top:608px;width:32px;height:32px;background:#fcfcd0;border:1px solid #000;"><svg class="a" style="left:0;top:0" width="30" height="30" shape-rendering="crispEdges"><path d="M2.5 0v5.5h8v-5.5" stroke="#000" fill="none"/><rect x="4" y="0" width="5" height="2" fill="#000"/><rect x="1.5" y="5.5" width="10" height="2" fill="#fff" stroke="#000"/><path d="M1 9.5h4M7 9.5h6M1 11.5h4M7 11.5h6M15 9.5h1M17 9.5h1M19 9.5h1M15 11.5h1M17 11.5h1M19 11.5h1" stroke="#000" fill="none"/><path d="M5 9.5l1-1 1 1M5 11.5l1-1 1 1" stroke="#000" fill="none"/><path d="M6.5 14v3.5l2.5 2.5h2" stroke="#000" fill="none"/><path d="M4 15l2.5-2.5 2.5 2.5z" fill="#000"/><rect x="11.5" y="15.5" width="11" height="8" fill="#fff" stroke="#000"/><path d="M14 17.5h1M16 17.5h2M19 17.5h2M13 19.5h2M16 19.5h2M19 19.5h2M13 21.5h1M15 21.5h2M18 21.5h2M23 19.5h6" stroke="#000"/><text x="13.5" y="7" font-size="7.5" font-weight="bold" font-family="Liberation Mono,monospace" letter-spacing="0.3">TCP</text></svg></div>
<div class="a" style="left:417px;top:594px;width:32px;height:17px;background:#fcfcd0;border:1px solid #000;"><div class="a" style="left:3px;top:4px;width:14px;height:8px;background:repeating-conic-gradient(#000 0 25%,#fff 0 50%) 0 0/2px 2px;border:1px solid #000"></div><svg class="a" style="left:19px;top:3px" width="11" height="10"><path d="M1 1v8M10 1v8M1 5h9" stroke="#000"/><path d="M2 5l2-2v4zM9 5l-2-2v4z" fill="#000"/></svg></div>
<div class="a" style="left:300px;top:659px;width:17px;height:15px;background:#fff;border:1px solid #000;"><span class="a tx" style="left:1px;top:0px;letter-spacing:-0.3px">56</span></div>
<div class="a" style="left:318px;top:657px;width:120px;height:17px;background:#fff;border:2px solid #1010c0"><span class="a tx" style="left:2px;top:1px;letter-spacing:-0.15px">Connection timed out</span><div class="a" style="left:106px;top:5px;border-left:4px solid transparent;border-right:4px solid transparent;border-top:5px solid #1010c0"></div></div>
<div class="a" style="left:447px;top:624px;width:32px;height:32px;background:#fcfcd0;border:1px solid #000;background:#fff"><div class="a" style="left:1px;top:1px;width:16px;height:11px;background:#555;border:1px solid #000"></div><div class="a" style="left:2px;top:2px;width:4px;height:4px;background:#f00"></div><div class="a" style="left:3px;top:7px;width:11px;height:3px;background:#fff"></div><div class="a" style="left:22px;top:2px;width:3px;height:13px;background:#000"></div><span class="a" style="left:2px;top:12px;font-size:17px;font-weight:bold;line-height:17px">?</span><div class="a" style="left:14px;top:17px;width:16px;height:11px;background:#555;border:1px solid #000"></div><div class="a" style="left:15px;top:18px;width:4px;height:4px;background:#0c0"></div><div class="a" style="left:16px;top:23px;width:11px;height:3px;background:#fff"></div></div>
<svg class="a" style="left:496px;top:563px" width="139" height="98" shape-rendering="crispEdges"><defs><pattern id="ck496" x="1" y="1" width="4" height="4" patternUnits="userSpaceOnUse"><rect width="4" height="4" fill="#000"/><rect x="0" y="0" width="2" height="1" fill="#fff"/><rect x="0" y="1" width="1" height="1" fill="#fff"/><rect x="2" y="2" width="2" height="1" fill="#fff"/><rect x="2" y="3" width="1" height="1" fill="#fff"/></pattern></defs><rect width="139" height="98" fill="url(#ck496)"/><rect x="0.5" y="0.5" width="138" height="97" fill="none" stroke="#000"/><rect x="6" y="6" width="127" height="86" fill="#fff"/></svg>
<div class="a" style="left:540px;top:563px;width:51px;height:15px;background:#fff;border:1px solid #000"><div class="a" style="left:1px;top:3px;border-right:6px solid #000;border-top:4px solid transparent;border-bottom:4px solid transparent"></div><div class="a" style="left:7px;top:0;width:1px;height:13px;background:#000"></div><span class="a tx" style="left:10px;top:0;letter-spacing:-0.3px">..0</span><div class="a" style="left:32px;top:5px;border-left:4px solid transparent;border-right:4px solid transparent;border-top:5px solid #000"></div><div class="a" style="left:41px;top:0;width:1px;height:13px;background:#000"></div><div class="a" style="left:43px;top:3px;border-left:6px solid #000;border-top:4px solid transparent;border-bottom:4px solid transparent"></div></div>
<div class="a" style="left:496px;top:581px;width:9px;height:9px;background:#f000f0;border:1px solid #000"></div>
<div class="a" style="left:496px;top:596px;width:9px;height:12px;background:#fff;border:1px solid #1010c0"><span class="a" style="left:0;top:-1px;font-size:10px;color:#1010c0">?</span></div>
<div class="a" style="left:496px;top:616px;width:9px;height:9px;background:#f000f0;border:1px solid #000"></div>
<div class="a" style="left:626px;top:585px;width:9px;height:9px;background:#f000f0;border:1px solid #000"></div>
<div class="a" style="left:569px;top:634px;width:25px;height:14px;background:#fff;border:2px solid #208020"><svg class="a" style="left:4px;top:1px" width="6" height="9"><path d="M0.5 1.5l1 1M4.5 1.5l-1 1M2.5 3v1.5l1 1-1 1 1 1" stroke="#000" fill="none" stroke-width="0.9"/></svg><div class="a" style="left:12px;top:1px;width:9px;height:9px;background:#208020;color:#fff;font-size:8px;line-height:9px;text-align:center;font-weight:bold">F</div></div>
<div class="a" style="left:626px;top:637px;width:9px;height:9px;background:#007000;border:1px solid #000"></div>
<div class="a" style="left:581px;top:663px;width:54px;height:16px;background:#fff;border:1px solid #000"><div class="a" style="left:0;top:0;width:16px;height:14px;background:#fcfcd0;border-right:1px solid #000"></div><svg class="a" style="left:1px;top:2px" width="14" height="10"><path d="M1 5h8" stroke="#000" stroke-width="2"/><path d="M8 1l5 4-5 4z" fill="#000"/></svg><span class="a tx" style="left:20px;top:0;color:#106010;font-size:12px">status</span></div>
<div class="a" style="left:651px;top:605px;width:33px;height:23px;background:#f0fcf0;border:1px solid #105a10"><div class="a" style="left:2px;top:2px;right:2px;bottom:2px;border:1px solid #105a10"></div><span class="a tx" style="left:5px;top:4px;color:#105a10;font-size:12px">stop</span></div>
<div class="a" style="left:743px;top:633px;width:16px;height:16px;background:#e8f8e8;border:1px solid #106010"><div class="a" style="left:1px;top:1px;width:12px;height:12px;border-radius:50%;background:#fff;border:1px solid #300000"></div><div class="a" style="left:3px;top:3px;width:8px;height:8px;border-radius:50%;background:#f00000;border:1px solid #c00000"></div></div>
<div class="a" style="left:793px;top:516px;width:33px;height:23px;background:#000"></div>
<div class="a" style="left:789px;top:512px;width:33px;height:23px;background:#f0fcf0;border:1px solid #105a10"><div class="a" style="left:2px;top:2px;right:2px;bottom:2px;border:1px solid #105a10"></div><span class="a tx" style="left:5px;top:4px;color:#105a10;font-size:12px">stop</span></div>
<div class="a tx" style="left:1061px;top:535px;">String</div>
<div class="a" style="left:1061px;top:549px;width:31px;height:16px;background:#fdf0fd;border:1px solid #a010a0"><div class="a" style="left:2px;top:2px;right:2px;bottom:2px;border:1px solid #c020c0"></div><div class="a" style="left:3px;top:3px;border-left:4px solid #200020;border-top:4px solid transparent;border-bottom:4px solid transparent"></div><span class="a" style="left:9px;top:0;font-size:10px;font-weight:bold;color:#c000c0;font-family:Liberation Serif,serif;letter-spacing:0.5px">abc</span></div>
<div class="a" style="left:877px;top:762px;width:43px;height:17px;background:#fff;border:2px solid #f000f0;border-left-width:3px"><span class="a tx" style="left:2px;top:1px;letter-spacing:0.4px">%.;%f</span></div>
<div class="a" style="left:940px;top:756px;width:13px;height:17px;background:#fff;border:2px solid #f000f0;border-left-width:3px"><span class="a tx" style="left:3px;top:1px;font-weight:bold">:</span></div>
<div class="a" style="left:931px;top:780px;width:32px;height:32px;background:#fcfcd0;border:1px solid #000;"><div class="a" style="left:2px;top:2px;width:20px;height:8px;background:repeating-conic-gradient(#000 0 25%,#fff 0 50%) 0 0/2px 2px;border:1px solid #000;font-size:8px;line-height:7px;font-weight:bold;text-align:center"><span style="background:#fff">%%</span></div><svg class="a" style="left:0;top:0" width="30" height="30"><path d="M2 13.5h2M5 13.5h2M2 16.5h2M5 16.5h2M2 19.5h2M5 19.5h2M8.5 12v9" stroke="#000" stroke-width="1.5"/><path d="M12 17h3" stroke="#000"/><path d="M14 15l3 2-3 2z" fill="#000"/><rect x="19.5" y="11.5" width="9" height="16" fill="#fff" stroke="#000"/><path d="M24.5 12v15M20 15.5h8M20 19.5h8M20 23.5h8" stroke="#000"/><circle cx="5" cy="25" r="2.5" fill="none" stroke="#000"/></svg></div>
<div class="a tx" style="left:1080px;top:744px;background:#fff;border:1px solid #000;padding:0 1px">file path (dialog if empty) 2</div>
<div class="a" style="left:1080px;top:759px;width:31px;height:15px;background:#d0f0f0;border:2px solid #208080"><div class="a" style="left:1px;top:1px;right:6px;bottom:1px;background:#fff;border:1px solid #208080"></div><svg class="a" style="left:3px;top:3px" width="18" height="6"><path d="M1 2h3l3 2h5" stroke="#208080" fill="none"/><circle cx="13" cy="4" r="1.5" fill="none" stroke="#208080"/></svg><div class="a" style="left:22px;top:2px;border-left:5px solid #000;border-top:4px solid transparent;border-bottom:4px solid transparent"></div></div>
<div class="a" style="left:1114px;top:784px;width:32px;height:32px;background:#fcfcd0;border:1px solid #000;background:#fff"><svg class="a" style="left:0;top:0" width="30" height="30" shape-rendering="crispEdges"><path d="M0 12.5h30M6.5 13v17M14.5 13v17M22.5 13v17M7 18.5h23M7 23.5h23" stroke="#000" fill="none"/><path d="M3.5 17v2M2 23h3M2 25h3M3.5 23v2" stroke="#000"/><path d="M9 15h2l1 1v1M9 15v2M16 15h3l1 1-1 1h-3zM25 16l2-1M25 16l2 1" stroke="#000" fill="none"/><path d="M7 12l10-10 3 3-10 10z" fill="#fff" stroke="#000"/><path d="M11 9l2 2M14 6l2 2" stroke="#000"/></svg></div>
<div class="a" style="left:1130px;top:844px;width:15px;height:23px;background:#fff;border:2px solid #f000f0;border-left-width:3px"><span class="a tx" style="left:3px;top:4px;font-weight:bold">;</span></div>
<div class="a" style="left:1036px;top:862px;width:27px;height:14px;background:#fff;border:2px solid #208020"><svg class="a" style="left:4px;top:1px" width="6" height="9"><path d="M0.5 1.5l1 1M4.5 1.5l-1 1M2.5 3v1.5l1 1-1 1 1 1" stroke="#000" fill="none" stroke-width="0.9"/></svg><div class="a" style="left:13px;top:1px;width:9px;height:9px;background:#208020;color:#fff;font-size:8px;line-height:9px;text-align:center;font-weight:bold">F</div></div>
<div class="a" style="left:858px;top:875px;width:31px;height:35px;background:#fff;border:2px solid #f09020"><div class="a" style="left:1px;top:1px;width:6px;height:29px;background:#f8d0a0;border:1px solid #f09020"></div><div class="a" style="left:9px;top:1px;width:18px;height:14px;border:1px solid #f09020"></div><div class="a" style="left:9px;top:16px;width:18px;height:14px;border:1px solid #f09020"></div><span class="a tx" style="left:11px;top:2px">0</span><span class="a tx" style="left:11px;top:17px">0</span></div>
<div class="a" style="left:890px;top:875px;width:21px;height:23px;background:#fff;border:2px solid #f09020"><div class="a" style="left:1px;top:1px;right:1px;bottom:1px;border:1px solid #f8c080"></div><span class="a tx" style="left:5px;top:3px;color:#a0a0a0">0</span></div>
<div class="a" style="left:1040px;top:435px;width:6px;height:4px;background:#fff"></div>
<div class="a" style="left:659px;top:405px;width:6px;height:4px;background:#fff"></div><svg class="a" style="left:0;top:0" width="1280" height="998" shape-rendering="crispEdges"><line x1="59" y1="180.5" x2="107" y2="180.5" stroke="#d810d8" stroke-width="1" stroke-dasharray="2 2"/>
<line x1="59" y1="181.5" x2="107" y2="181.5" stroke="#d810d8" stroke-width="1" stroke-dasharray="2 2" stroke-dashoffset="2"/>
<polyline points="59,212 88,212 88,189 106,189" stroke="#2020b0" stroke-width="1" fill="none"/>
<polyline points="86,247 98,247 98,205 106,205" stroke="#c8c830" stroke-width="3" fill="none" stroke-linejoin="miter"/>
<polyline points="86,247 98,247 98,205 106,205" stroke="#ffff30" stroke-width="1" fill="none"/>
<polyline points="86,247 98,247 98,205 106,205" stroke="#000" stroke-width="1" stroke-dasharray="2 2" fill="none"/>
<line x1="45" y1="257.5" x2="55" y2="257.5" stroke="#d810d8" stroke-width="1" stroke-dasharray="2 2"/>
<line x1="45" y1="258.5" x2="55" y2="258.5" stroke="#d810d8" stroke-width="1" stroke-dasharray="2 2" stroke-dashoffset="2"/>
<polyline points="138,181 139,181 139,245 154,245" stroke="#007878" stroke-width="1" fill="none"/>
<polyline points="139,248 139,269 154,269" stroke="#c8c830" stroke-width="3" fill="none" stroke-linejoin="miter"/>
<polyline points="139,248 139,269 154,269" stroke="#ffff30" stroke-width="1" fill="none"/>
<polyline points="139,248 139,269 154,269" stroke="#000" stroke-width="1" stroke-dasharray="2 2" fill="none"/>
<polyline points="163,245 1262,245" stroke="#007878" stroke-width="1" fill="none"/>
<polyline points="249,245 249,612 283,612" stroke="#007878" stroke-width="1" fill="none"/>
<polyline points="249,297 283,297" stroke="#007878" stroke-width="1" fill="none"/>
<circle cx="249.5" cy="245.5" r="2.5" fill="#007070"/>
<circle cx="249.5" cy="297.5" r="2.5" fill="#007070"/>
<polyline points="292,297 804,297 804,367 811,367" stroke="#007878" stroke-width="1" fill="none"/>
<polyline points="292,612 355,612" stroke="#007878" stroke-width="1" fill="none"/>
<line x1="274" y1="281.5" x2="284" y2="281.5" stroke="#d810d8" stroke-width="1" stroke-dasharray="2 2"/>
<line x1="274" y1="282.5" x2="284" y2="282.5" stroke="#d810d8" stroke-width="1" stroke-dasharray="2 2" stroke-dashoffset="2"/>
<polyline points="428,332 435,332" stroke="#2020b0" stroke-width="1" fill="none"/>
<line x1="318" y1="353.5" x2="394" y2="353.5" stroke="#d810d8" stroke-width="1" stroke-dasharray="2 2"/>
<line x1="318" y1="354.5" x2="394" y2="354.5" stroke="#d810d8" stroke-width="1" stroke-dasharray="2 2" stroke-dashoffset="2"/>
<line x1="324.5" y1="354" x2="324.5" y2="371" stroke="#d810d8" stroke-width="1" stroke-dasharray="2 2"/>
<line x1="325.5" y1="354" x2="325.5" y2="371" stroke="#d810d8" stroke-width="1" stroke-dasharray="2 2" stroke-dashoffset="2"/>
<line x1="325" y1="369.5" x2="331" y2="369.5" stroke="#d810d8" stroke-width="1" stroke-dasharray="2 2"/>
<line x1="325" y1="370.5" x2="331" y2="370.5" stroke="#d810d8" stroke-width="1" stroke-dasharray="2 2" stroke-dashoffset="2"/>
<line x1="514" y1="334.5" x2="657" y2="334.5" stroke="#d810d8" stroke-width="1" stroke-dasharray="2 2"/>
<line x1="514" y1="335.5" x2="657" y2="335.5" stroke="#d810d8" stroke-width="1" stroke-dasharray="2 2" stroke-dashoffset="2"/>
<circle cx="559" cy="335" r="2" fill="none" stroke="#e000e0"/>
<line x1="558.5" y1="335" x2="558.5" y2="345" stroke="#d810d8" stroke-width="1" stroke-dasharray="2 2"/>
<line x1="559.5" y1="335" x2="559.5" y2="345" stroke="#d810d8" stroke-width="1" stroke-dasharray="2 2" stroke-dashoffset="2"/>
<line x1="559" y1="343.5" x2="572" y2="343.5" stroke="#d810d8" stroke-width="1" stroke-dasharray="2 2"/>
<line x1="559" y1="344.5" x2="572" y2="344.5" stroke="#d810d8" stroke-width="1" stroke-dasharray="2 2" stroke-dashoffset="2"/>
<line x1="402" y1="353.5" x2="572" y2="353.5" stroke="#d810d8" stroke-width="1" stroke-dasharray="2 2"/>
<line x1="402" y1="354.5" x2="572" y2="354.5" stroke="#d810d8" stroke-width="1" stroke-dasharray="2 2" stroke-dashoffset="2"/>
<path d="M571.5 339.5 L592.5 349.5 L571.5 359.5 Z" fill="#fcfcd0" stroke="#000"/>
<polyline points="592,349 604,349" stroke="#106010" stroke-width="1" stroke-dasharray="1 1" fill="none"/>
<path d="M604.5 345.5 Q612 353 604.5 360.5 L616 360.5 Q622 358 626 353 Q622 348 616 345.5 Z" fill="#fcfcd0" stroke="#000"/>
<polyline points="626,353 638,353" stroke="#106010" stroke-width="1" stroke-dasharray="1 1" fill="none"/>
<polyline points="571,380 656,380" stroke="#106010" stroke-width="1" stroke-dasharray="1 1" fill="none"/>
<circle cx="597.5" cy="380.5" r="2" fill="none" stroke="#106010"/>
<polyline points="597,380 597,357 604,357" stroke="#106010" stroke-width="1" stroke-dasharray="1 1" fill="none"/>
<polyline points="597,380 597,401 656,401" stroke="#106010" stroke-width="1" stroke-dasharray="1 1" fill="none"/>
<line x1="299" y1="281.5" x2="767" y2="281.5" stroke="#d810d8" stroke-width="1" stroke-dasharray="2 2"/>
<line x1="299" y1="282.5" x2="767" y2="282.5" stroke="#d810d8" stroke-width="1" stroke-dasharray="2 2" stroke-dashoffset="2"/>
<line x1="815" y1="281.5" x2="1031" y2="281.5" stroke="#d810d8" stroke-width="1" stroke-dasharray="2 2"/>
<line x1="815" y1="282.5" x2="1031" y2="282.5" stroke="#d810d8" stroke-width="1" stroke-dasharray="2 2" stroke-dashoffset="2"/>
<line x1="665" y1="334.5" x2="716" y2="334.5" stroke="#d810d8" stroke-width="1" stroke-dasharray="2 2"/>
<line x1="665" y1="335.5" x2="716" y2="335.5" stroke="#d810d8" stroke-width="1" stroke-dasharray="2 2" stroke-dashoffset="2"/>
<line x1="696" y1="346.5" x2="706" y2="346.5" stroke="#d810d8" stroke-width="1" stroke-dasharray="2 2"/>
<line x1="696" y1="347.5" x2="706" y2="347.5" stroke="#d810d8" stroke-width="1" stroke-dasharray="2 2" stroke-dashoffset="2"/>
<line x1="704.5" y1="343" x2="704.5" y2="348" stroke="#d810d8" stroke-width="1" stroke-dasharray="2 2"/>
<line x1="705.5" y1="343" x2="705.5" y2="348" stroke="#d810d8" stroke-width="1" stroke-dasharray="2 2" stroke-dashoffset="2"/>
<line x1="705" y1="342.5" x2="716" y2="342.5" stroke="#d810d8" stroke-width="1" stroke-dasharray="2 2"/>
<line x1="705" y1="343.5" x2="716" y2="343.5" stroke="#d810d8" stroke-width="1" stroke-dasharray="2 2" stroke-dashoffset="2"/>
<line x1="747" y1="338.5" x2="758" y2="338.5" stroke="#d810d8" stroke-width="1" stroke-dasharray="2 2"/>
<line x1="747" y1="339.5" x2="758" y2="339.5" stroke="#d810d8" stroke-width="1" stroke-dasharray="2 2" stroke-dashoffset="2"/>
<circle cx="757.5" cy="339.5" r="2" fill="none" stroke="#e000e0"/>
<line x1="757" y1="289.5" x2="767" y2="289.5" stroke="#d810d8" stroke-width="1" stroke-dasharray="2 2"/>
<line x1="757" y1="290.5" x2="767" y2="290.5" stroke="#d810d8" stroke-width="1" stroke-dasharray="2 2" stroke-dashoffset="2"/>
<line x1="756.5" y1="290" x2="756.5" y2="371" stroke="#d810d8" stroke-width="1" stroke-dasharray="2 2"/>
<line x1="757.5" y1="290" x2="757.5" y2="371" stroke="#d810d8" stroke-width="1" stroke-dasharray="2 2" stroke-dashoffset="2"/>
<line x1="757" y1="369.5" x2="767" y2="369.5" stroke="#d810d8" stroke-width="1" stroke-dasharray="2 2"/>
<line x1="757" y1="370.5" x2="767" y2="370.5" stroke="#d810d8" stroke-width="1" stroke-dasharray="2 2" stroke-dashoffset="2"/>
<line x1="703" y1="365.5" x2="714" y2="365.5" stroke="#d810d8" stroke-width="1" stroke-dasharray="2 2"/>
<line x1="703" y1="366.5" x2="714" y2="366.5" stroke="#d810d8" stroke-width="1" stroke-dasharray="2 2" stroke-dashoffset="2"/>
<line x1="712.5" y1="366" x2="712.5" y2="371" stroke="#d810d8" stroke-width="1" stroke-dasharray="2 2"/>
<line x1="713.5" y1="366" x2="713.5" y2="371" stroke="#d810d8" stroke-width="1" stroke-dasharray="2 2" stroke-dashoffset="2"/>
<line x1="713" y1="369.5" x2="721" y2="369.5" stroke="#d810d8" stroke-width="1" stroke-dasharray="2 2"/>
<line x1="713" y1="370.5" x2="721" y2="370.5" stroke="#d810d8" stroke-width="1" stroke-dasharray="2 2" stroke-dashoffset="2"/>
<line x1="698" y1="391.5" x2="714" y2="391.5" stroke="#d810d8" stroke-width="1" stroke-dasharray="2 2"/>
<line x1="698" y1="392.5" x2="714" y2="392.5" stroke="#d810d8" stroke-width="1" stroke-dasharray="2 2" stroke-dashoffset="2"/>
<line x1="712.5" y1="388" x2="712.5" y2="393" stroke="#d810d8" stroke-width="1" stroke-dasharray="2 2"/>
<line x1="713.5" y1="388" x2="713.5" y2="393" stroke="#d810d8" stroke-width="1" stroke-dasharray="2 2" stroke-dashoffset="2"/>
<line x1="713" y1="387.5" x2="721" y2="387.5" stroke="#d810d8" stroke-width="1" stroke-dasharray="2 2"/>
<line x1="713" y1="388.5" x2="721" y2="388.5" stroke="#d810d8" stroke-width="1" stroke-dasharray="2 2" stroke-dashoffset="2"/>
<path d="M720.5 366.5 L746.5 379.5 L720.5 392.5 Z" fill="#fcfcd0" stroke="#000"/><path d="M728 373l6 6h10M734 379l-6 7" stroke="#000" stroke-width="1.5" fill="none"/>
<polyline points="665,380 720,380" stroke="#106010" stroke-width="1" stroke-dasharray="1 1" fill="none"/>
<line x1="747" y1="378.5" x2="767" y2="378.5" stroke="#d810d8" stroke-width="1" stroke-dasharray="2 2"/>
<line x1="747" y1="379.5" x2="767" y2="379.5" stroke="#d810d8" stroke-width="1" stroke-dasharray="2 2" stroke-dashoffset="2"/>
<line x1="798" y1="374.5" x2="812" y2="374.5" stroke="#d810d8" stroke-width="1" stroke-dasharray="2 2"/>
<line x1="798" y1="375.5" x2="812" y2="375.5" stroke="#d810d8" stroke-width="1" stroke-dasharray="2 2" stroke-dashoffset="2"/>
<line x1="798" y1="285.5" x2="816" y2="285.5" stroke="#d810d8" stroke-width="1" stroke-dasharray="2 2"/>
<line x1="798" y1="286.5" x2="816" y2="286.5" stroke="#d810d8" stroke-width="1" stroke-dasharray="2 2" stroke-dashoffset="2"/>
<circle cx="815.5" cy="285.5" r="2" fill="none" stroke="#e000e0"/>
<line x1="814.5" y1="282" x2="814.5" y2="312" stroke="#d810d8" stroke-width="1" stroke-dasharray="2 2"/>
<line x1="815.5" y1="282" x2="815.5" y2="312" stroke="#d810d8" stroke-width="1" stroke-dasharray="2 2" stroke-dashoffset="2"/>
<line x1="815" y1="310.5" x2="824" y2="310.5" stroke="#d810d8" stroke-width="1" stroke-dasharray="2 2"/>
<line x1="815" y1="311.5" x2="824" y2="311.5" stroke="#d810d8" stroke-width="1" stroke-dasharray="2 2" stroke-dashoffset="2"/>
<polyline points="665,401 811,401" stroke="#106010" stroke-width="1" stroke-dasharray="1 1" fill="none"/>
<circle cx="798.5" cy="401.5" r="2" fill="none" stroke="#106010"/>
<polyline points="798,401 798,424 975,424" stroke="#106010" stroke-width="1" stroke-dasharray="1 1" fill="none"/>
<polyline points="871,391 1038,391" stroke="#c8c830" stroke-width="3" fill="none" stroke-linejoin="miter"/>
<polyline points="871,391 1038,391" stroke="#ffff30" stroke-width="1" fill="none"/>
<polyline points="871,391 1038,391" stroke="#000" stroke-width="1" stroke-dasharray="2 2" fill="none"/>
<circle cx="902.5" cy="391.5" r="2.5" fill="none" stroke="#000"/>
<polyline points="902,391 902,405 909,405" stroke="#c8c830" stroke-width="3" fill="none" stroke-linejoin="miter"/>
<polyline points="902,391 902,405 909,405" stroke="#ffff30" stroke-width="1" fill="none"/>
<polyline points="902,391 902,405 909,405" stroke="#000" stroke-width="1" stroke-dasharray="2 2" fill="none"/>
<polyline points="963,405 968,405 968,416 975,416" stroke="#106010" stroke-width="1" stroke-dasharray="1 1" fill="none"/>
<path d="M975.5 411.5 Q983 419.5 975.5 427.5 L987 427.5 Q993 425 997 419.5 Q993 414 987 411.5 Z" fill="#fcfcd0" stroke="#000"/>
<polyline points="997,420 1014,420" stroke="#106010" stroke-width="1" stroke-dasharray="1 1" fill="none"/>
<circle cx="1004.5" cy="420.5" r="2" fill="none" stroke="#106010"/>
<polyline points="1004,420 1004,407 1038,407" stroke="#106010" stroke-width="1" stroke-dasharray="1 1" fill="none"/>
<polyline points="1046,407 1076,407" stroke="#106010" stroke-width="1" stroke-dasharray="1 1" fill="none"/>
<polyline points="1046,391 1057,391 1057,292 1075,292" stroke="#c8c830" stroke-width="3" fill="none" stroke-linejoin="miter"/>
<polyline points="1046,391 1057,391 1057,292 1075,292" stroke="#ffff30" stroke-width="1" fill="none"/>
<polyline points="1046,391 1057,391 1057,292 1075,292" stroke="#000" stroke-width="1" stroke-dasharray="2 2" fill="none"/>
<polyline points="1067,508 1067,301 1075,301" stroke="#c8c830" stroke-width="3" fill="none" stroke-linejoin="miter"/>
<polyline points="1067,508 1067,301 1075,301" stroke="#ffff30" stroke-width="1" fill="none"/>
<polyline points="1067,508 1067,301 1075,301" stroke="#000" stroke-width="1" stroke-dasharray="2 2" fill="none"/>
<polyline points="1107,316 1229,316 1229,277 1238,277" stroke="#c8c830" stroke-width="3" fill="none" stroke-linejoin="miter"/>
<polyline points="1107,316 1229,316 1229,277 1238,277" stroke="#ffff30" stroke-width="1" fill="none"/>
<polyline points="1107,316 1229,316 1229,277 1238,277" stroke="#000" stroke-width="1" stroke-dasharray="2 2" fill="none"/>
<polyline points="1217,257 1222,257 1222,252 1238,252" stroke="#2020b0" stroke-width="1" fill="none"/>
<polyline points="1217,276 1222,276 1222,265 1238,265" stroke="#2020b0" stroke-width="1" fill="none"/>
<line x1="274" y1="496.5" x2="296" y2="496.5" stroke="#d810d8" stroke-width="1" stroke-dasharray="2 2"/>
<line x1="274" y1="497.5" x2="296" y2="497.5" stroke="#d810d8" stroke-width="1" stroke-dasharray="2 2" stroke-dashoffset="2"/>
<line x1="294.5" y1="497" x2="294.5" y2="509" stroke="#d810d8" stroke-width="1" stroke-dasharray="2 2"/>
<line x1="295.5" y1="497" x2="295.5" y2="509" stroke="#d810d8" stroke-width="1" stroke-dasharray="2 2" stroke-dashoffset="2"/>
<line x1="299" y1="584.5" x2="498" y2="584.5" stroke="#d810d8" stroke-width="1" stroke-dasharray="2 2"/>
<line x1="299" y1="585.5" x2="498" y2="585.5" stroke="#d810d8" stroke-width="1" stroke-dasharray="2 2" stroke-dashoffset="2"/>
<polyline points="341,596 347,596 347,620 355,620" stroke="#2020b0" stroke-width="1" fill="none"/>
<polyline points="343,627 355,627" stroke="#2020b0" stroke-width="1" fill="none"/>
<line x1="387" y1="619.5" x2="498" y2="619.5" stroke="#d810d8" stroke-width="1" stroke-dasharray="2 2"/>
<line x1="387" y1="620.5" x2="498" y2="620.5" stroke="#d810d8" stroke-width="1" stroke-dasharray="2 2" stroke-dashoffset="2"/>
<circle cx="406.5" cy="620.5" r="2" fill="none" stroke="#e000e0"/>
<line x1="405.5" y1="602" x2="405.5" y2="621" stroke="#d810d8" stroke-width="1" stroke-dasharray="2 2"/>
<line x1="406.5" y1="602" x2="406.5" y2="621" stroke="#d810d8" stroke-width="1" stroke-dasharray="2 2" stroke-dashoffset="2"/>
<line x1="406" y1="601.5" x2="418" y2="601.5" stroke="#d810d8" stroke-width="1" stroke-dasharray="2 2"/>
<line x1="406" y1="602.5" x2="418" y2="602.5" stroke="#d810d8" stroke-width="1" stroke-dasharray="2 2" stroke-dashoffset="2"/>
<polyline points="449,602 497,602" stroke="#2020b0" stroke-width="1" fill="none"/>
<polyline points="387,637 394,637 394,652 447,652" stroke="#c8c830" stroke-width="3" fill="none" stroke-linejoin="miter"/>
<polyline points="387,637 394,637 394,652 447,652" stroke="#ffff30" stroke-width="1" fill="none"/>
<polyline points="387,637 394,637 394,652 447,652" stroke="#000" stroke-width="1" stroke-dasharray="2 2" fill="none"/>
<polyline points="438,666 439,666 439,627 447,627" stroke="#2020b0" stroke-width="1" fill="none"/>
<polyline points="479,652 486,652 486,684 1262,684" stroke="#c8c830" stroke-width="3" fill="none" stroke-linejoin="miter"/>
<polyline points="479,652 486,652 486,684 1262,684" stroke="#ffff30" stroke-width="1" fill="none"/>
<polyline points="479,652 486,652 486,684 1262,684" stroke="#000" stroke-width="1" stroke-dasharray="2 2" fill="none"/>
<polyline points="486,671 581,671" stroke="#c8c830" stroke-width="3" fill="none" stroke-linejoin="miter"/>
<polyline points="486,671 581,671" stroke="#ffff30" stroke-width="1" fill="none"/>
<polyline points="486,671 581,671" stroke="#000" stroke-width="1" stroke-dasharray="2 2" fill="none"/>
<circle cx="486.5" cy="671.5" r="2.5" fill="none" stroke="#000"/>
<line x1="505" y1="584.5" x2="582" y2="584.5" stroke="#d810d8" stroke-width="1" stroke-dasharray="2 2"/>
<line x1="505" y1="585.5" x2="582" y2="585.5" stroke="#d810d8" stroke-width="1" stroke-dasharray="2 2" stroke-dashoffset="2"/>
<line x1="580.5" y1="585" x2="580.5" y2="590" stroke="#d810d8" stroke-width="1" stroke-dasharray="2 2"/>
<line x1="581.5" y1="585" x2="581.5" y2="590" stroke="#d810d8" stroke-width="1" stroke-dasharray="2 2" stroke-dashoffset="2"/>
<line x1="581" y1="588.5" x2="627" y2="588.5" stroke="#d810d8" stroke-width="1" stroke-dasharray="2 2"/>
<line x1="581" y1="589.5" x2="627" y2="589.5" stroke="#d810d8" stroke-width="1" stroke-dasharray="2 2" stroke-dashoffset="2"/>
<line x1="635" y1="588.5" x2="778" y2="588.5" stroke="#d810d8" stroke-width="1" stroke-dasharray="2 2"/>
<line x1="635" y1="589.5" x2="778" y2="589.5" stroke="#d810d8" stroke-width="1" stroke-dasharray="2 2" stroke-dashoffset="2"/>
<line x1="776.5" y1="585" x2="776.5" y2="590" stroke="#d810d8" stroke-width="1" stroke-dasharray="2 2"/>
<line x1="777.5" y1="585" x2="777.5" y2="590" stroke="#d810d8" stroke-width="1" stroke-dasharray="2 2" stroke-dashoffset="2"/>
<line x1="777" y1="584.5" x2="1263" y2="584.5" stroke="#d810d8" stroke-width="1" stroke-dasharray="2 2"/>
<line x1="777" y1="585.5" x2="1263" y2="585.5" stroke="#d810d8" stroke-width="1" stroke-dasharray="2 2" stroke-dashoffset="2"/>
<polyline points="594,641 626,641" stroke="#106010" stroke-width="1" stroke-dasharray="1 1" fill="none"/>
<polyline points="635,641 649,641" stroke="#106010" stroke-width="1" stroke-dasharray="1 1" fill="none"/>
<polyline points="635,671 645,671 645,649 649,649" stroke="#106010" stroke-width="1" stroke-dasharray="1 1" fill="none"/>
<path d="M648.5 636.5 Q656 644.5 648.5 652.5 L660 652.5 Q666 650 670.5 644.5 Q666 639 660 636.5 Z" fill="#fcfcd0" stroke="#000"/>
<polyline points="684,617 700,617 700,638 705,638" stroke="#106010" stroke-width="1" stroke-dasharray="1 1" fill="none"/>
<polyline points="671,645 705,645" stroke="#106010" stroke-width="1" stroke-dasharray="1 1" fill="none"/>
<path d="M704.5 632.5 Q712 640.5 704.5 648.5 L716 648.5 Q722 646 727 640.5 Q722 635 716 632.5 Z" fill="#fcfcd0" stroke="#000"/>
<polyline points="727,641 743,641" stroke="#106010" stroke-width="1" stroke-dasharray="1 1" fill="none"/>
<circle cx="733.5" cy="641.5" r="2" fill="none" stroke="#106010"/>
<polyline points="733,641 733,612 1262,612" stroke="#106010" stroke-width="1" stroke-dasharray="1 1" fill="none"/>
<line x1="1075.5" y1="565" x2="1075.5" y2="586" stroke="#d810d8" stroke-width="1" stroke-dasharray="2 2"/>
<line x1="1076.5" y1="565" x2="1076.5" y2="586" stroke="#d810d8" stroke-width="1" stroke-dasharray="2 2" stroke-dashoffset="2"/>
<circle cx="1076.5" cy="585.5" r="2" fill="none" stroke="#e000e0"/>
<circle cx="820.5" cy="585.5" r="2" fill="none" stroke="#e000e0"/>
<line x1="819.5" y1="585" x2="819.5" y2="797" stroke="#d810d8" stroke-width="1" stroke-dasharray="2 2"/>
<line x1="820.5" y1="585" x2="820.5" y2="797" stroke="#d810d8" stroke-width="1" stroke-dasharray="2 2" stroke-dashoffset="2"/>
<line x1="820" y1="795.5" x2="932" y2="795.5" stroke="#d810d8" stroke-width="1" stroke-dasharray="2 2"/>
<line x1="820" y1="796.5" x2="932" y2="796.5" stroke="#d810d8" stroke-width="1" stroke-dasharray="2 2" stroke-dashoffset="2"/>
<line x1="920" y1="769.5" x2="926" y2="769.5" stroke="#d810d8" stroke-width="1" stroke-dasharray="2 2"/>
<line x1="920" y1="770.5" x2="926" y2="770.5" stroke="#d810d8" stroke-width="1" stroke-dasharray="2 2" stroke-dashoffset="2"/>
<line x1="924.5" y1="770" x2="924.5" y2="787" stroke="#d810d8" stroke-width="1" stroke-dasharray="2 2"/>
<line x1="925.5" y1="770" x2="925.5" y2="787" stroke="#d810d8" stroke-width="1" stroke-dasharray="2 2" stroke-dashoffset="2"/>
<line x1="925" y1="785.5" x2="932" y2="785.5" stroke="#d810d8" stroke-width="1" stroke-dasharray="2 2"/>
<line x1="925" y1="786.5" x2="932" y2="786.5" stroke="#d810d8" stroke-width="1" stroke-dasharray="2 2" stroke-dashoffset="2"/>
<line x1="945.5" y1="773" x2="945.5" y2="781" stroke="#d810d8" stroke-width="1" stroke-dasharray="2 2"/>
<line x1="946.5" y1="773" x2="946.5" y2="781" stroke="#d810d8" stroke-width="1" stroke-dasharray="2 2" stroke-dashoffset="2"/>
<polyline points="963,796 1114,796" stroke="#f09830" stroke-width="3" fill="none"/>
<polyline points="963,796 1114,796" stroke="#ffe8c0" stroke-width="1" fill="none"/>
<polyline points="911,885 918,885 918,806 931,806" stroke="#f09830" stroke-width="3" fill="none"/>
<polyline points="911,885 918,885 918,806 931,806" stroke="#ffe8c0" stroke-width="1" fill="none"/>
<line x1="1093.5" y1="774" x2="1093.5" y2="789" stroke="#208080" stroke-width="1" stroke-dasharray="2 2"/>
<line x1="1094.5" y1="774" x2="1094.5" y2="789" stroke="#208080" stroke-width="1" stroke-dasharray="2 2" stroke-dashoffset="2"/>
<line x1="1094" y1="787.5" x2="1115" y2="787.5" stroke="#208080" stroke-width="1" stroke-dasharray="2 2"/>
<line x1="1094" y1="788.5" x2="1115" y2="788.5" stroke="#208080" stroke-width="1" stroke-dasharray="2 2" stroke-dashoffset="2"/>
<line x1="1141.5" y1="816" x2="1141.5" y2="845" stroke="#d810d8" stroke-width="1" stroke-dasharray="2 2"/>
<line x1="1142.5" y1="816" x2="1142.5" y2="845" stroke="#d810d8" stroke-width="1" stroke-dasharray="2 2" stroke-dashoffset="2"/>
<polyline points="1063,869 1106,869 1106,812 1114,812" stroke="#106010" stroke-width="1" stroke-dasharray="1 1" fill="none"/></svg><div class="a" style="left:574px;top:341px;font-size:13px;font-weight:bold">≠</div>
<div class="a" style="left:610px;top:345px;font-size:12px;font-weight:bold">v</div>
<div class="a" style="left:723px;top:375px;font-size:9px;font-weight:bold">?</div>
<div class="a" style="left:980px;top:411px;font-size:12px;font-weight:bold">v</div>
<div class="a" style="left:654px;top:636px;font-size:12px;font-weight:bold">v</div>
<div class="a" style="left:710px;top:632px;font-size:12px;font-weight:bold">v</div></div></div><div class="a" style="left:0;top:26px;width:2px;height:967px;background:#b0ac9c"></div>
<div class="a" style="left:1278px;top:28px;width:2px;height:965px;background:#efeee8"></div>
<!-- vertical scrollbar -->
<div class="a" style="left:1262px;top:74px;width:16px;height:902px;background:linear-gradient(90deg,#eeede5,#f6f5ee 50%,#fbfbf8)"></div>
<div class="a" style="left:1263px;top:75px;width:15px;height:15px;border-radius:2px;background:linear-gradient(135deg,#d8e4fc,#b4c8f6);border:1px solid #c4d2f4"><svg class="a" style="left:2px;top:3px" width="10" height="8"><path d="M1 6L5 2L9 6" stroke="#4d6185" stroke-width="2" fill="none"/></svg></div>
<div class="a" style="left:1263px;top:143px;width:15px;height:327px;border-radius:2px;background:linear-gradient(90deg,#c6d6fc,#b8cdfa 60%,#aec4f4);border:1px solid #b0c4f0"><div class="a" style="left:3px;top:158px;width:8px;height:1px;background:#eef2fe;box-shadow:0 2px 0 #eef2fe,0 4px 0 #eef2fe,0 6px 0 #eef2fe"></div></div>
<div class="a" style="left:1263px;top:960px;width:15px;height:15px;border-radius:2px;background:linear-gradient(135deg,#d8e4fc,#b4c8f6);border:1px solid #c4d2f4"><svg class="a" style="left:2px;top:3px" width="10" height="8"><path d="M1 2L5 6L9 2" stroke="#4d6185" stroke-width="2" fill="none"/></svg></div>
<!-- horizontal scrollbar -->
<div class="a" style="left:0;top:975px;width:1280px;height:18px;background:linear-gradient(#f0efe8,#f7f6f0 50%,#fbfaf6)"></div>
<div class="a" style="left:1262px;top:975px;width:16px;height:17px;background:#ece9d8"></div>
<div class="a" style="left:2px;top:975px;width:67px;height:17px;background:#fff;border:2px solid #000;border-right:none;border-top-width:1px"><span class="a" style="left:3px;top:1px;font-size:11px;letter-spacing:-0.25px">Evaluierung</span></div>
<div class="a" style="left:70px;top:977px;width:15px;height:15px;border-radius:2px;background:linear-gradient(135deg,#d8e4fc,#b4c8f6);border:1px solid #c4d2f4"><svg class="a" style="left:3px;top:2px" width="8" height="10"><path d="M6 1L2 5L6 9" stroke="#4d6185" stroke-width="2" fill="none"/></svg></div>
<div class="a" style="left:230px;top:977px;width:557px;height:15px;border-radius:2px;background:linear-gradient(#c6d6fc,#b8cdfa 60%,#aec4f4);border:1px solid #b0c4f0"><div class="a" style="left:275px;top:4px;width:1px;height:6px;background:#eef2fe;box-shadow:2px 0 0 #eef2fe,4px 0 0 #eef2fe,6px 0 0 #eef2fe"></div></div>
<div class="a" style="left:1246px;top:977px;width:15px;height:15px;border-radius:2px;background:linear-gradient(135deg,#d8e4fc,#b4c8f6);border:1px solid #c4d2f4"><svg class="a" style="left:3px;top:2px" width="8" height="10"><path d="M2 1L6 5L2 9" stroke="#4d6185" stroke-width="2" fill="none"/></svg></div>
<!-- taskbar strip -->
<div class="a" style="left:0;top:993px;width:1280px;height:5px;background:#2a68d8"></div>
<div class="a" style="left:0;top:993px;width:96px;height:5px;background:#3aa04a"></div>
<!-- watermark -->
<div class="a" style="left:0;top:0;width:1280px;height:998px;pointer-events:none">
 <svg class="a" style="left:0;top:0" width="1280" height="998"><g fill="none" stroke-linecap="round" stroke-linejoin="round"><path d="M911 899 Q918 903 925 911 L937 925.5" stroke="#c8c8c8" stroke-width="1.2"/><path d="M930 891 Q936 894 944 902.5 L957.7 919.5" stroke="#b4b4b4" stroke-width="1.3"/><path d="M957.7 919.5 L941.5 928" stroke="#a0a0a0" stroke-width="2"/><path d="M937 925.5 L936.5 932 L922.6 946.5" stroke="#a4a4a4" stroke-width="2"/><path d="M944 902.5 L949.3 898.7 L956.4 899" stroke="#a8a8a8" stroke-width="1.6"/><path d="M967.5 891.5 Q957 900 956.4 914.3" stroke="#9c9c9c" stroke-width="2"/></g></svg>
 <div class="a wm" style="left:968px;top:887px;transform:scaleX(0.944)">NATIONAL</div>
 <div class="a wm" style="left:961px;top:912px;transform:scaleX(0.884)">INSTRUMENTS</div>
 <div class="a" style="left:1128px;top:914px;font-size:6px;color:#aaa;font-weight:bold">TM</div>
 <div class="a wm" style="left:937px;top:941px;transform:scaleX(0.83)">LabVIEW</div>
 <div class="a" style="left:1033px;top:944px;font-size:7px;color:#aaa;font-weight:bold">TM</div>
 <div class="a wm" style="left:1048px;top:941px;transform:scaleX(0.81)">Evaluierungsversion</div>
</div>
<style>.wm{font-family:"Liberation Sans",sans-serif;font-weight:bold;font-size:26px;color:#fcfcfc;white-space:nowrap;line-height:30px;transform-origin:0 0;text-shadow:1px 1px 0 #c4c4c4,2px 2px 1px #b0b0b0,-1px 0 0 #e4e4e4,0 -1px 0 #e4e4e4}</style>
<div class="a" style="left:0;top:73px;width:1278px;height:1px;background:#000"></div>
<div class="a" style="left:2px;top:49px;width:1241px;height:1px;background:#fff"></div>
</body></html>
